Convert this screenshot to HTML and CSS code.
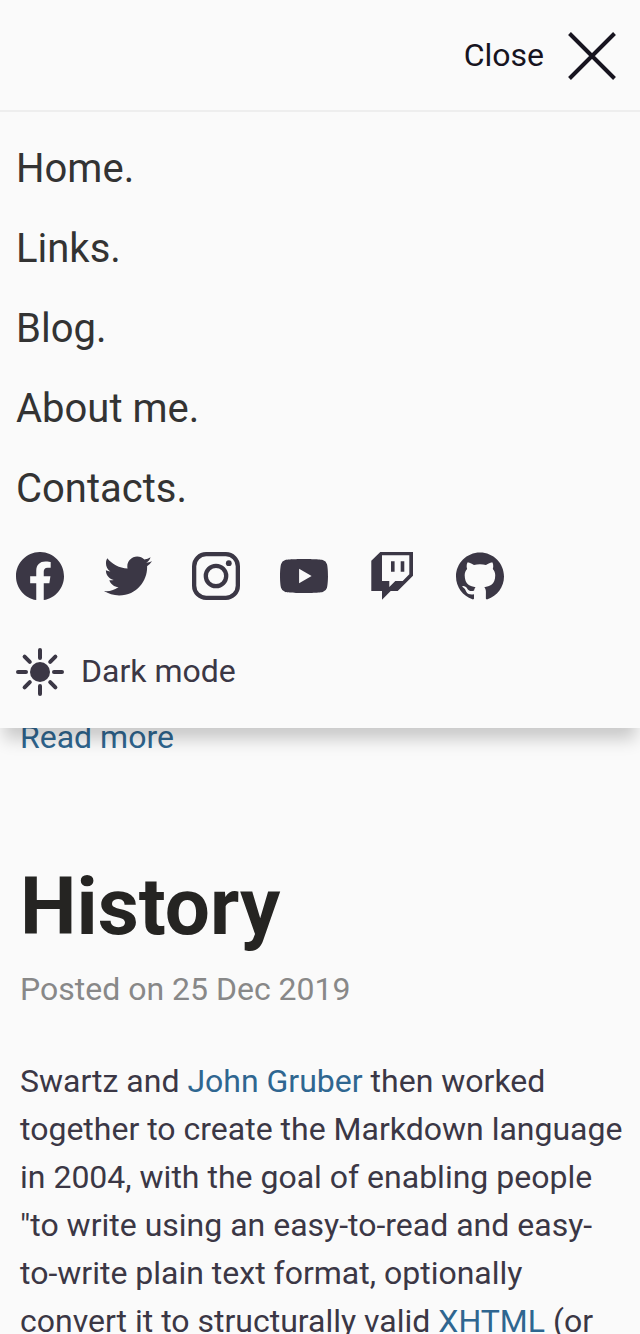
FILE: index.html
```html
<!DOCTYPE html>
<html lang="en">
<head>
<meta charset="utf-8">
<meta name="viewport" content="width=device-width, initial-scale=1">
<title>Blog</title>
<link rel="stylesheet" href="styles.css">
</head>
<body>
<header class="menu">
  <div class="menu-bar">
    <button class="close" type="button">
      <span class="label">Close</span>
      <svg class="icon" viewBox="0 0 48 48" aria-hidden="true"><path d="M1.5 1.5l45 45M46.5 1.5l-45 45" fill="none" stroke="currentColor" stroke-width="4"/></svg>
    </button>
  </div>
  <nav class="links">
    <a href="#">Home.</a>
    <a href="#">Links.</a>
    <a href="#">Blog.</a>
    <a href="#">About me.</a>
    <a href="#">Contacts.</a>
  </nav>
  <div class="social">
    <a href="#" aria-label="Facebook"><svg class="icon" viewBox="0 0 16 16"><path d="M16 8.049c0-4.446-3.582-8.05-8-8.05C3.58 0 0 3.603 0 8.05c0 4.017 2.926 7.347 6.75 7.951v-5.625h-2.03V8.05H6.75V6.275c0-2.017 1.195-3.131 3.022-3.131.876 0 1.791.157 1.791.157v1.98h-1.009c-.993 0-1.303.621-1.303 1.258v1.51h2.218l-.354 2.326H9.25V16c3.824-.604 6.75-3.934 6.75-7.951z"/></svg></a>
    <a href="#" aria-label="Twitter"><svg class="icon" viewBox="0 0 24 24"><path d="M23.954 4.569c-.885.389-1.83.654-2.825.775 1.014-.611 1.794-1.574 2.163-2.723-.951.555-2.005.959-3.127 1.184-.896-.959-2.173-1.559-3.591-1.559-2.717 0-4.92 2.203-4.92 4.917 0 .39.045.765.127 1.124C7.691 8.094 4.066 6.13 1.64 3.161c-.427.722-.666 1.561-.666 2.475 0 1.71.87 3.213 2.188 4.096-.807-.026-1.566-.248-2.228-.616v.061c0 2.385 1.693 4.374 3.946 4.827-.413.111-.849.171-1.296.171-.314 0-.615-.03-.916-.086.631 1.953 2.445 3.377 4.604 3.417-1.68 1.319-3.809 2.105-6.102 2.105-.39 0-.779-.023-1.17-.067 2.189 1.394 4.768 2.209 7.557 2.209 9.054 0 13.999-7.496 13.999-13.986 0-.209 0-.42-.015-.63.961-.689 1.8-1.56 2.46-2.548l-.047-.02z"/></svg></a>
    <a href="#" aria-label="Instagram"><svg class="icon" viewBox="0 0 48 48"><rect x="2.15" y="2.15" width="43.7" height="43.7" rx="12" fill="none" stroke="currentColor" stroke-width="4.3"/><circle cx="24" cy="24" r="10.2" fill="none" stroke="currentColor" stroke-width="4.3"/><circle cx="36.8" cy="11.2" r="2.9"/></svg></a>
    <a href="#" aria-label="YouTube"><svg class="icon" viewBox="0 0 24 24"><path d="M23.498 6.186a3.016 3.016 0 0 0-2.122-2.136C19.505 3.545 12 3.545 12 3.545s-7.505 0-9.377.505A3.017 3.017 0 0 0 .502 6.186C0 8.07 0 12 0 12s0 3.93.502 5.814a3.016 3.016 0 0 0 2.122 2.136c1.871.505 9.376.505 9.376.505s7.505 0 9.377-.505a3.015 3.015 0 0 0 2.122-2.136C24 15.93 24 12 24 12s0-3.93-.502-5.814zM9.545 15.568V8.432L15.818 12l-6.273 3.568z"/></svg></a>
    <a href="#" aria-label="Twitch"><svg class="icon" viewBox="0 0 48 48"><path fill-rule="evenodd" d="M3.3 8.7L12.3 0H45v23.7L29.7 39h-7L14 47.8V39H3.3zM14 3.3V29h7.3v6l6-6h7.4l6.6-6.7v-19zM23 9.3h3.6v10.4H23zM32.7 9.3h3.6v10.4h-3.6z"/></svg></a>
    <a href="#" aria-label="GitHub"><svg class="icon" viewBox="0 0 24 24"><path d="M12 .297c-6.63 0-12 5.373-12 12 0 5.303 3.438 9.8 8.205 11.385.6.113.82-.258.82-.577 0-.285-.01-1.04-.015-2.04-3.338.724-4.042-1.61-4.042-1.61C4.422 18.07 3.633 17.7 3.633 17.7c-1.087-.744.084-.729.084-.729 1.205.084 1.838 1.236 1.838 1.236 1.07 1.835 2.809 1.305 3.495.998.108-.776.417-1.305.76-1.605-2.665-.3-5.466-1.332-5.466-5.93 0-1.31.465-2.38 1.235-3.22-.135-.303-.54-1.523.105-3.176 0 0 1.005-.322 3.3 1.23.96-.267 1.98-.399 3-.405 1.02.006 2.04.138 3 .405 2.28-1.552 3.285-1.23 3.285-1.23.645 1.653.24 2.873.12 3.176.765.84 1.23 1.91 1.23 3.22 0 4.61-2.805 5.625-5.475 5.92.42.36.81 1.096.81 2.22 0 1.606-.015 2.896-.015 3.286 0 .315.21.69.825.57C20.565 22.092 24 17.592 24 12.297c0-6.627-5.373-12-12-12"/></svg></a>
  </div>
  <button class="theme" type="button">
    <svg class="icon" viewBox="0 0 48 48" aria-hidden="true"><circle cx="24" cy="24" r="10"/><path d="M24 2v8M24 38v8M2 24h8M38 24h8M8.6 8.6l5.2 5.2M34.2 34.2l5.2 5.2M39.4 8.6l-5.2 5.2M13.8 34.2l-5.2 5.2" fill="none" stroke="currentColor" stroke-width="4" stroke-linecap="round"/></svg>
    <span class="label">Dark mode</span>
  </button>
</header>
<main class="page">
  <a class="read-more" href="#">Read more</a>
  <article class="post">
    <h1 class="title">History</h1>
    <p class="date">Posted on 25 Dec 2019</p>
    <p class="text">Swartz and <a href="#">John Gruber</a> then worked together to create the Markdown language in 2004, with the goal of enabling people "to write using an easy-to-read and easy-to-write plain text format, optionally convert it to structurally valid <a href="#">XHTML</a> (or</p>
  </article>
</main>
</body>
</html>
```
FILE: styles.css
```css
* {
  box-sizing: border-box;
}

body {
  margin: 0;
  height: 100vh;
  overflow: hidden;
  background: #fafafa;
  color: #3b3745;
  font: 32px/48px Roboto, sans-serif;
}

a {
  color: #2f6690;
  text-decoration: none;
}

button {
  display: flex;
  align-items: center;
  padding: 0;
  border: 0;
  background: none;
  color: inherit;
  font: inherit;
  line-height: 46px;
  cursor: pointer;
}

.label {
  padding-bottom: 2px;
}

.icon {
  display: block;
  flex: none;
  width: 48px;
  height: 48px;
  fill: currentColor;
}

.menu {
  position: relative;
  z-index: 1;
  padding-bottom: 32px;
  background: #fafafa;
  box-shadow: 0 15px 16px -4px rgba(0, 0, 0, 0.2);
}

.menu-bar {
  display: flex;
  justify-content: flex-end;
  padding: 32px 24px 30px;
  border-bottom: 2px solid #eee;
}

.close {
  gap: 24px;
  color: #17141f;
}

.links {
  display: flex;
  flex-direction: column;
  padding: 17px 16px 23px;
}

.links a {
  color: #333;
  font-size: 40px;
  line-height: 80px;
}

.social {
  display: flex;
  gap: 40px;
  padding: 0 16px 48px;
}

.social a {
  color: inherit;
}

.theme {
  gap: 17px;
  margin-left: 16px;
}

.page {
  margin-top: -15px;
  padding: 0 16px 0 20px;
}

.read-more {
  display: block;
}

.post {
  padding-top: 98px;
}

.title {
  margin: 0 0 10px;
  color: #252422;
  font-size: 80px;
  line-height: 96px;
  font-weight: 700;
}

.date {
  margin: 0 0 44px;
  color: #888;
}

.text {
  margin: 0;
}
```
